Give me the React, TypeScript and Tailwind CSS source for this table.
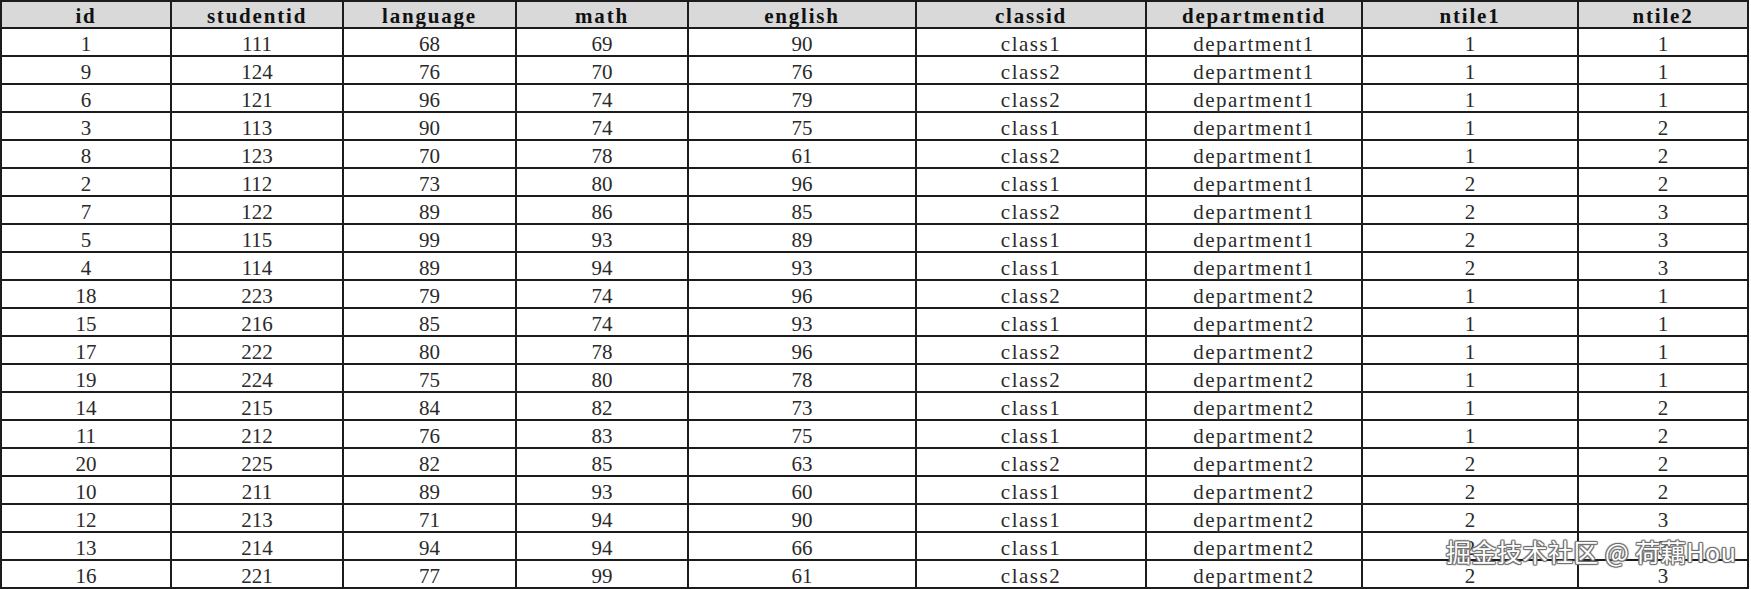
import React from "react";

const headers = ["id", "studentid", "language", "math", "english", "classid", "departmentid", "ntile1", "ntile2"];

const rows: string[][] = [
  ["1", "111", "68", "69", "90", "class1", "department1", "1", "1"],
  ["9", "124", "76", "70", "76", "class2", "department1", "1", "1"],
  ["6", "121", "96", "74", "79", "class2", "department1", "1", "1"],
  ["3", "113", "90", "74", "75", "class1", "department1", "1", "2"],
  ["8", "123", "70", "78", "61", "class2", "department1", "1", "2"],
  ["2", "112", "73", "80", "96", "class1", "department1", "2", "2"],
  ["7", "122", "89", "86", "85", "class2", "department1", "2", "3"],
  ["5", "115", "99", "93", "89", "class1", "department1", "2", "3"],
  ["4", "114", "89", "94", "93", "class1", "department1", "2", "3"],
  ["18", "223", "79", "74", "96", "class2", "department2", "1", "1"],
  ["15", "216", "85", "74", "93", "class1", "department2", "1", "1"],
  ["17", "222", "80", "78", "96", "class2", "department2", "1", "1"],
  ["19", "224", "75", "80", "78", "class2", "department2", "1", "1"],
  ["14", "215", "84", "82", "73", "class1", "department2", "1", "2"],
  ["11", "212", "76", "83", "75", "class1", "department2", "1", "2"],
  ["20", "225", "82", "85", "63", "class2", "department2", "2", "2"],
  ["10", "211", "89", "93", "60", "class1", "department2", "2", "2"],
  ["12", "213", "71", "94", "90", "class1", "department2", "2", "3"],
  ["13", "214", "94", "94", "66", "class1", "department2", "2", "3"],
  ["16", "221", "77", "99", "61", "class2", "department2", "2", "3"],
];

const grid = "grid grid-cols-[170px_172px_173px_172px_228px_230px_216px_216px_170px]";

export default function App() {
  return (
    <div className="relative w-[1751px] h-[589px] bg-white overflow-hidden">
      <div
        className="w-[1749px] border-l-2 border-t-2 border-[#1c1c1c]"
        style={{ fontFamily: '"Liberation Serif", "Noto Sans CJK SC", serif' }}
      >
        <div className={`${grid} bg-[#d9d9d9]`}>
          {headers.map((h) => (
            <div
              key={h}
              className="h-[27px] border-r-2 border-b-2 border-[#1c1c1c] flex items-center justify-center pt-[5px] text-[21px] font-bold tracking-[1.8px] text-[#111]"
            >
              {h}
            </div>
          ))}
        </div>
        {rows.map((r, i) => (
          <div key={i} className={grid}>
            {r.map((c, j) => (
              <div
                key={j}
                className={`h-[28px] border-r-2 border-b-2 border-[#1c1c1c] flex items-center justify-center pt-[6px] text-[21px] text-[#2a2a2a] ${
                  /^\d+$/.test(c) ? "tracking-[0px]" : "tracking-[1.5px]"
                }`}
              >
                {c}
              </div>
            ))}
          </div>
        ))}
      </div>
      <div
        className="absolute left-[1446px] top-[536px] text-[25px] leading-[30px] tracking-[0.5px] text-white whitespace-nowrap"
        style={{
          fontFamily: '"Noto Sans CJK SC", "Noto Sans", sans-serif',
          textShadow:
            "1px 1px 1px #707070, -1px -1px 1px #707070, 1px -1px 1px #707070, -1px 1px 1px #707070, 0 1px 0 #808080, 0 -1px 0 #808080, 1px 0 0 #808080, -1px 0 0 #808080",
        }}
      >
        掘金技术社区 @ 荷藕Hou
      </div>
    </div>
  );
}
